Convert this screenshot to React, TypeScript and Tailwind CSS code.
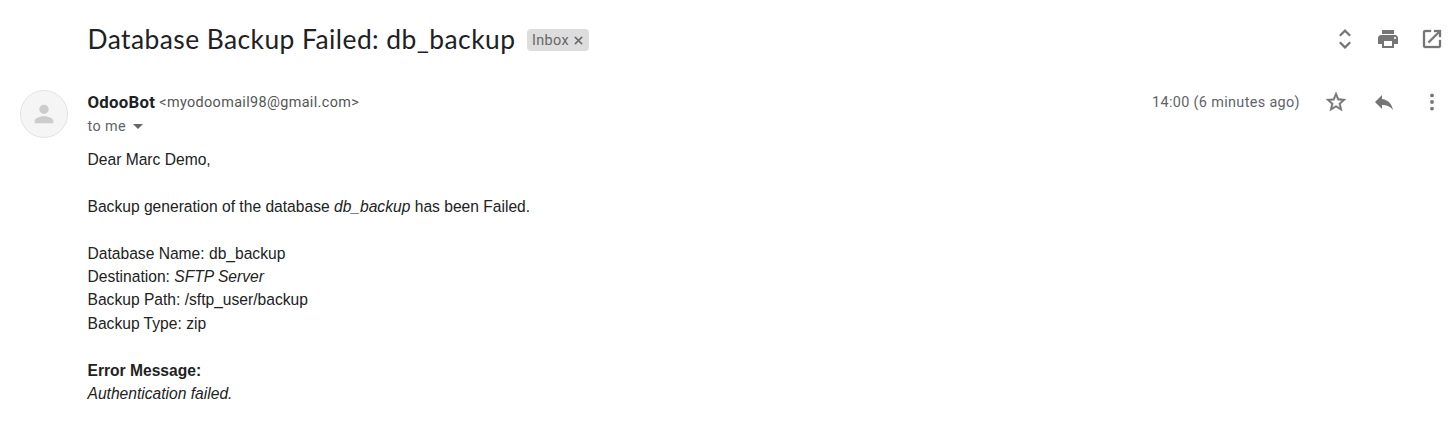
import React from "react";

function Icon({ d, size, className = "" }: { d: string; size: number; className?: string }) {
  return (
    <svg width={size} height={size} viewBox="0 0 24 24" fill="currentColor" className={`shrink-0 ${className}`} aria-hidden="true">
      <path d={d} />
    </svg>
  );
}

const UNFOLD = "M13 5.2 17.4 9.6 19 8 13 2 7 8 8.6 9.6 13 5.2zM13 18.8 8.6 14.4 7 16 13 22l6-6-1.6-1.6L13 18.8z";
const PRINT = "M19 8H5c-1.66 0-3 1.34-3 3v6h4v4h12v-4h4v-6c0-1.66-1.34-3-3-3zm-3 11H8v-5h8v5zm3-7c-.55 0-1-.45-1-1s.45-1 1-1 1 .45 1 1-.45 1-1 1zm-1-9H6v4h12V3z";
const OPEN = "M19 19H5V5h6V3H5c-1.11 0-2 .9-2 2v14c0 1.1.89 2 2 2h14c1.1 0 2-.9 2-2v-6h-2v6zM14 3v2h3.59l-9.83 9.83 1.41 1.41L19 6.41V10h2V3h-7z";
const STAR = "M22 9.24l-7.19-.62L12 2 9.19 8.63 2 9.24l5.46 4.73L5.82 21 12 17.27 18.18 21l-1.63-7.03L22 9.24zM12 15.4l-3.76 2.27 1-4.28-3.32-2.88 4.38-.38L12 6.1l1.71 4.04 4.38.38-3.32 2.88 1 4.28L12 15.4z";
const REPLY = "M10 9V5l-7 7 7 7v-4.1c5 0 8.5 1.6 11 5.1-1-5-4-10-11-11z";
const MORE = "M12 7.3a1.9 1.9 0 1 0 0-3.8 1.9 1.9 0 0 0 0 3.8zM12 13.9a1.9 1.9 0 1 0 0-3.8 1.9 1.9 0 0 0 0 3.8zM12 20.5a1.9 1.9 0 1 0 0-3.8 1.9 1.9 0 0 0 0 3.8z";
const PERSON = "M12 12c2.21 0 4-1.79 4-4s-1.79-4-4-4-4 1.79-4 4 1.79 4 4 4zm0 2c-2.67 0-8 1.34-8 4v2h16v-2c0-2.66-5.33-4-8-4z";
const CLOSE = "M19 6.41 17.59 5 12 10.59 6.41 5 5 6.41 10.59 12 5 17.59 6.41 19 12 13.41 17.59 19 19 17.59 13.41 12z";

export default function App() {
  return (
    <main className="h-[421px] w-full overflow-hidden bg-white pt-[18px] text-[#222222]">
      <header className="flex h-[44px] items-center pl-[87.5px] pr-[9px]">
        <h1 className="w-[428px] whitespace-nowrap pb-[3px] font-[Lato,sans-serif] text-[26.4px] leading-[42px] tracking-[0.44px] text-[#202124]">Database Backup Failed: db_backup</h1>
        <span className="ml-[11.5px] flex h-[22px] w-[62px] items-center rounded bg-[#dddddd] pl-[5px] font-[Roboto,sans-serif] text-[14.4px] tracking-[0.36px] text-[#666666]">
          <span className="pt-px">Inbox</span>
          <Icon d={CLOSE} size={13} className="ml-[3.5px] stroke-current stroke-[1.2]" />
        </span>
        <div className="ml-auto flex items-center gap-5 pb-0.5 text-[#757575]">
          <Icon d={UNFOLD} size={24} />
          <Icon d={PRINT} size={24} />
          <Icon d={OPEN} size={24} className="stroke-current stroke-[0.3]" />
        </div>
      </header>
      <section className="mt-7 flex pl-5 pr-[9px]">
        <div className="flex size-12 shrink-0 items-center justify-center rounded-full border border-[#e3e3e3] bg-[#f5f5f5] text-[#cccccc]">
          <Icon d={PERSON} size={28} />
        </div>
        <div className="ml-[19.5px] font-[Roboto,sans-serif]">
          <div className="flex h-6 items-center whitespace-nowrap pt-0.5">
            <b className="text-[16.8px] tracking-[0.28px] text-[#202124]">OdooBot</b>
            <span className="ml-1 text-[14.4px] tracking-[0.36px] text-[#555555]">&lt;myodoomail98@gmail.com&gt;</span>
          </div>
          <div className="flex h-6 items-center text-[14.4px] tracking-[0.36px] text-[#5f6368]">
            <span className="pt-px">to me</span>
            <svg width="10" height="5" viewBox="0 0 10 5" className="ml-[7px]"><path d="M0 0h10L5 5z" fill="#666" /></svg>
          </div>
        </div>
        <div className="ml-auto flex h-6 items-center font-[Roboto,sans-serif] text-[14.4px] tracking-[0.36px] text-[#5f6368]">
          <span className="pt-px">14:00 (6 minutes ago)</span>
          <div className="ml-6 flex gap-6 text-[#757575]">
            <Icon d={STAR} size={24} className="stroke-current stroke-[0.4]" />
            <Icon d={REPLY} size={24} />
            <Icon d={MORE} size={24} />
          </div>
        </div>
      </section>
      <article className="mt-[10px] pl-[87.5px] font-['Liberation_Sans',sans-serif] text-[15.62px] leading-[23.4px]">
        <p>Dear Marc Demo,</p>
        <br />
        <p>Backup generation of the database <i>db_backup</i> has been Failed.</p>
        <br />
        <p>Database Name: db_backup</p>
        <p>Destination: <i>SFTP Server</i></p>
        <p>Backup Path: /sftp_user/backup</p>
        <p>Backup Type: zip</p>
        <br />
        <p><b>Error Message:</b></p>
        <p><i>Authentication failed.</i></p>
      </article>
    </main>
  );
}
